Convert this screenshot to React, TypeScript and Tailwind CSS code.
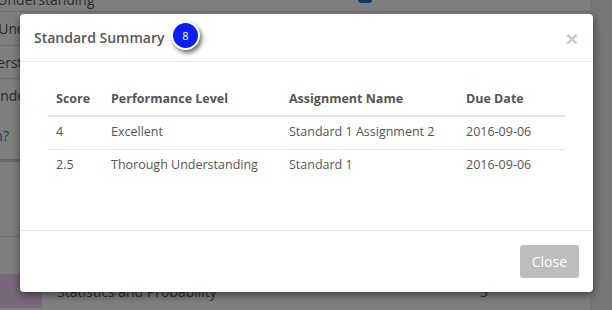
const rows = [
  { score: "4", level: "Excellent", assignment: "Standard 1 Assignment 2", due: "2016-09-06" },
  { score: "2.5", level: "Thorough Understanding", assignment: "Standard 1", due: "2016-09-06" },
];

function PageBehind() {
  return (
    <div className="w-[590px] h-[310px] bg-white overflow-hidden text-[14px] text-[#555] whitespace-nowrap">
      {/* cut row above */}
      <div className="h-[12px] flex items-end border-b border-[#ddd] relative">
        <span className="shrink-0 -ml-[70px] leading-[14px] translate-y-[-4px]">Thorough Understanding</span>
        <span className="absolute left-[358px] top-[-10px] w-[14px] h-[13px] rounded-[3px] bg-[#2a6fc9]" />
      </div>
      <div className="h-[34px] flex items-center border-b border-[#ddd]">
        <span className="shrink-0 -ml-[69px]">Thorough Understanding</span>
      </div>
      <div className="h-[33px] flex items-center border-b border-[#ddd]">
        <span className="shrink-0 -ml-[30px]">Understanding</span>
      </div>
      <div className="h-[33px] flex items-center">
        <span className="shrink-0 -ml-[10px]">Understanding</span>
      </div>
      <div className="h-[47px] flex items-center">
        <span className="shrink-0 -ml-[74px] text-[#3377c2]">Explanation?</span>
      </div>
      <div className="h-[3px] bg-[#d0d0d0]" />
      <div className="h-[75px] border-b border-[#ddd]" />
      <div className="h-[38px] border-b border-[#e4e4e4]" />
      <div className="h-[33px] flex items-center">
        <div className="w-[42px] h-full shrink-0 bg-[#f2cff6]" />
        <span className="ml-[15px] w-[423px] shrink-0">Statistics and Probability</span>
        <span className="text-[#2a5ca8]">3</span>
      </div>
    </div>
  );
}

export default function App() {
  return (
    <div
      className="w-[612px] h-[310px] bg-[#ececec] overflow-hidden relative"
      style={{ fontFamily: '"Open Sans", "Liberation Sans", sans-serif' }}
    >
      <PageBehind />

      {/* Backdrop */}
      <div className="absolute inset-0 bg-black/50" />

      {/* Modal */}
      <div className="absolute left-[20px] top-[14px] w-[573px] h-[278px] bg-white rounded-[4px] shadow-[0_3px_9px_rgba(0,0,0,0.5)] flex flex-col text-[#555]">
        <div className="h-[48px] flex items-center justify-between pl-[14px] pr-[15px] border-b border-[#e5e5e5] relative">
          <h4 className="text-[14px] font-semibold leading-[20px] mt-[1px]">Standard Summary</h4>
          <button
            type="button"
            aria-label="Close"
            className="text-[21px] font-bold leading-none text-[#c8c8c8] mt-[1px]"
            style={{ fontFamily: '"Liberation Sans", sans-serif' }}
          >
            ×
          </button>

          {/* step badge */}
          <div className="absolute left-[151px] top-[7px] w-[29px] h-[29px] rounded-full bg-[#0a1ff5] border-2 border-white shadow-[2px_3px_4px_rgba(0,0,0,0.55)] grid place-items-center text-white text-[11px] leading-none">
            8
          </div>
        </div>

        <div className="flex-1 px-[28px] pt-[19px]">
          <table className="w-full text-[12.5px] border-collapse">
            <thead>
              <tr className="h-[35px] border-b-2 border-[#e2e2e2] text-left">
                <th className="w-[55px] pl-[8px] pt-[2px] font-bold">Score</th>
                <th className="w-[178px] pl-[8px] pt-[2px] font-bold">Performance Level</th>
                <th className="w-[177px] pl-[8px] pt-[2px] font-bold">Assignment Name</th>
                <th className="pl-[8px] pt-[2px] font-bold">Due Date</th>
              </tr>
            </thead>
            <tbody>
              {rows.map((r, i) => (
                <tr
                  key={r.score}
                  className={[
                    "h-[33px]",
                    i < rows.length - 1 ? "border-b border-[#e6e6e6]" : "",
                  ].join(" ")}
                >
                  <td className="pl-[8px]">{r.score}</td>
                  <td className="pl-[8px]">{r.level}</td>
                  <td className="pl-[8px]">{r.assignment}</td>
                  <td className="pl-[8px]">{r.due}</td>
                </tr>
              ))}
            </tbody>
          </table>
        </div>

        <div className="h-[62px] border-t border-[#e5e5e5] flex items-center justify-end px-[14px]">
          <button
            type="button"
            className="h-[33px] px-[12px] rounded-[3px] bg-[#bdbdbd] text-white text-[14px]"
          >
            Close
          </button>
        </div>
      </div>
    </div>
  );
}
